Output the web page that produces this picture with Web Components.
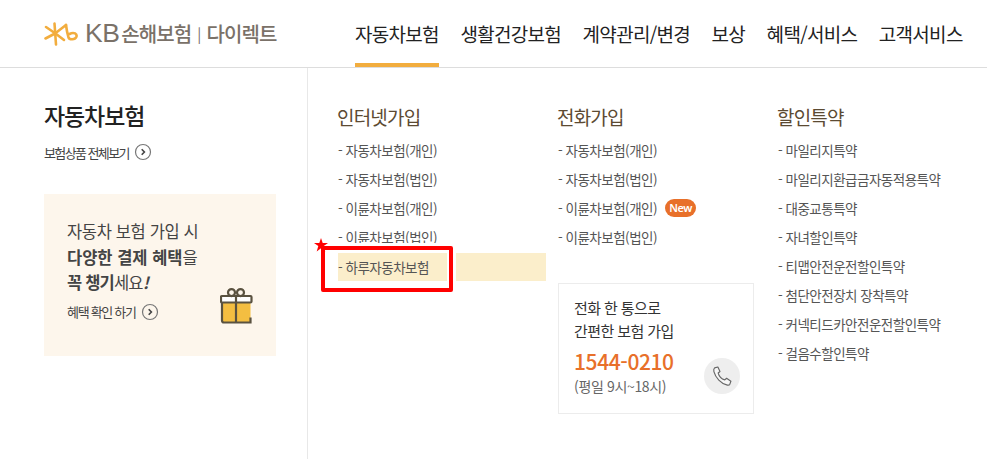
<!DOCTYPE html>
<html lang="ko">
<head>
<meta charset="utf-8">
<title>KB 손해보험 다이렉트</title>
<style>
    html, body { margin: 0; padding: 0; background: #fff; }
    body { width: 987px; height: 459px; overflow: hidden; font-family: "Noto Sans CJK KR", "Noto Sans", sans-serif; }
</style>
</head>
<body>
<site-header></site-header>
<mega-menu>
    <menu-aside></menu-aside>
    <menu-column title="인터넷가입">
        <menu-link>자동차보험(개인)</menu-link>
        <menu-link>자동차보험(법인)</menu-link>
        <menu-link>이륜차보험(개인)</menu-link>
        <menu-link>이륜차보험(법인)</menu-link>
        <menu-link highlight marked>하루자동차보험</menu-link>
    </menu-column>
    <menu-column title="전화가입">
        <menu-link>자동차보험(개인)</menu-link>
        <menu-link>자동차보험(법인)</menu-link>
        <menu-link badge="New">이륜차보험(개인)</menu-link>
        <menu-link>이륜차보험(법인)</menu-link>
        <phone-card></phone-card>
    </menu-column>
    <menu-column title="할인특약">
        <menu-link>마일리지특약</menu-link>
        <menu-link>마일리지환급금자동적용특약</menu-link>
        <menu-link>대중교통특약</menu-link>
        <menu-link>자녀할인특약</menu-link>
        <menu-link>티맵안전운전할인특약</menu-link>
        <menu-link>첨단안전장치 장착특약</menu-link>
        <menu-link>커넥티드카안전운전할인특약</menu-link>
        <menu-link>걸음수할인특약</menu-link>
    </menu-column>
</mega-menu>
<script>
const chevron = `
    <svg class="chev" width="18" height="18" viewBox="0 0 18 18" fill="none">
        <circle cx="9" cy="9" r="7.500" stroke="#777" stroke-width="1.200"/>
        <path d="M7.700 6.200 10.400 9 7.700 11.800" stroke="#444" stroke-width="1.600"/>
    </svg>`;

class SiteHeader extends HTMLElement {
    constructor() {
        super();
        this.attachShadow({ mode: 'open' });
        const items = ['자동차보험', '생활건강보험', '계약관리/변경', '보상', '혜택/서비스', '고객서비스'];
        this.shadowRoot.innerHTML = `
            <style>
                :host {
                    display: flex;
                    height: 67px;
                    border-bottom: 1px solid #ddd;
                    padding-left: 44px;
                }
                .logo {
                    display: flex;
                    align-items: center;
                    width: 311px;
                    height: 67px;
                    color: #7a7168;
                    white-space: nowrap;
                }
                .logo svg { margin-right: 7px; margin-top: 1px; flex: none; }
                .kb { font: 400 26.500px "Liberation Sans", sans-serif; letter-spacing: -0.500px; margin-right: 2px; }
                .name { font-size: 20px; font-weight: 500; letter-spacing: -0.900px; }
                .sep { font-size: 15px; margin: 0 5px 0 6px; }
                nav { display: flex; gap: 21.500px; }
                a {
                    display: block;
                    height: 63px;
                    line-height: 67px;
                    font-size: 19px;
                    letter-spacing: -0.700px;
                    color: #222;
                    white-space: nowrap;
                }
                a.active { border-bottom: 4px solid #f2ad3e; }
            </style>
            <div class="logo">
                <svg width="34" height="24" viewBox="0 0 34 24" fill="none" stroke="#f2ad3e" stroke-width="2.600" stroke-linecap="round" stroke-linejoin="round">
                    <path d="M10.500 1.500 12 22.500"/>
                    <path d="M1.500 16.500 11 11.500 22 3"/>
                    <path d="M2 5 11.500 11.500 20 18"/>
                    <path d="M22 3c.5 4 1.500 9 2.500 12.500 1 2.500 6.500 2.500 7.800-.5 1.200-3-2.300-5.500-6.800-3"/>
                </svg>
                <span class="kb">KB</span><span class="name">손해보험</span><span class="sep">|</span><span class="name">다이렉트</span>
            </div>
            <nav>${items.map((t, i) => `<a class="${i === 0 ? 'active' : ''}">${t}</a>`).join('')}</nav>
        `;
    }
}
customElements.define('site-header', SiteHeader);

class MegaMenu extends HTMLElement {
    constructor() {
        super();
        this.attachShadow({ mode: 'open' });
        this.shadowRoot.innerHTML = `
            <style>
                :host {
                    display: grid;
                    grid-template-columns: 308px 220px 220px 1fr;
                    height: 391px;
                }
            </style>
            <slot></slot>
        `;
    }
}
customElements.define('mega-menu', MegaMenu);

class MenuAside extends HTMLElement {
    constructor() {
        super();
        this.attachShadow({ mode: 'open' });
        this.shadowRoot.innerHTML = `
            <style>
                :host {
                    display: block;
                    border-right: 1px solid #e8e8e8;
                    padding: 30px 0 0 44px;
                    box-sizing: border-box;
                    color: #444;
                }
                h2 {
                    margin: 0;
                    font-size: 23px;
                    font-weight: 500;
                    line-height: 34px;
                    letter-spacing: -1.100px;
                    color: #222;
                }
                .all {
                    display: flex;
                    align-items: center;
                    gap: 5px;
                    margin-top: 9px;
                    height: 22px;
                    font-size: 13px;
                    letter-spacing: -1.600px;
                }
                .promo {
                    position: relative;
                    margin-top: 31px;
                    width: 232px;
                    height: 162px;
                    padding: 25px 0 0 23px;
                    box-sizing: border-box;
                    background: #fdf6ec;
                }
                .promo p {
                    margin: 0;
                    font-size: 16.500px;
                    line-height: 25.500px;
                    letter-spacing: -0.350px;
                }
                .wide { letter-spacing: 0; }
                .tight { letter-spacing: -0.800px; }
                b { font-weight: 700; }
                .check {
                    display: flex;
                    align-items: center;
                    gap: 5px;
                    margin-top: 5px;
                    height: 22px;
                    font-size: 13px;
                    letter-spacing: -1.300px;
                }
                .gift { position: absolute; left: 176px; top: 94px; }
            </style>
            <h2>자동차보험</h2>
            <div class="all">보험상품 전체보기 ${chevron}</div>
            <div class="promo">
                <p>자동차 보험 가입 시<br><span class="wide"><b>다양한 결제 혜택</b>을</span><br><span class="tight"><b>꼭 챙기</b>세요<b><i>!</i></b></span></p>
                <div class="check">혜택 확인 하기 ${chevron}</div>
                <svg class="gift" width="33" height="37" viewBox="0 0 33 37" fill="none" stroke="#5a5240" stroke-width="2.200">
                    <rect x="2" y="14" width="28.500" height="21" rx="2" fill="#f4be41" stroke="none"/>
                    <path d="M2 14v18.500a2 2 0 0 0 2 2H30.500v-5"/>
                    <rect x="1" y="8" width="30.500" height="6.500" rx="1" fill="#fff"/>
                    <path d="M16 8v27"/>
                    <circle cx="11.500" cy="4.600" r="3.500"/>
                    <circle cx="20.500" cy="4.600" r="3.500"/>
                </svg>
            </div>
        `;
    }
}
customElements.define('menu-aside', MenuAside);

class MenuColumn extends HTMLElement {
    constructor() {
        super();
        this.attachShadow({ mode: 'open' });
        this.shadowRoot.innerHTML = `
            <style>
                :host { display: block; padding: 35px 0 0 30px; }
                h3 {
                    margin: 0 0 4px -1px;
                    font-size: 19px;
                    font-weight: 400;
                    line-height: 28px;
                    letter-spacing: -0.800px;
                    color: #5c4a32;
                }
            </style>
            <h3>${this.getAttribute('title')}</h3>
            <slot></slot>
        `;
        this.removeAttribute('title');
    }
}
customElements.define('menu-column', MenuColumn);

class MenuLink extends HTMLElement {
    constructor() {
        super();
        this.attachShadow({ mode: 'open' });
        const badge = this.getAttribute('badge');
        const marked = this.hasAttribute('marked');
        this.shadowRoot.innerHTML = `
            <style>
                :host {
                    position: relative;
                    display: flex;
                    align-items: center;
                    height: 29px;
                    width: 208px;
                    font-size: 13.500px;
                    letter-spacing: -0.500px;
                    color: #555;
                    white-space: nowrap;
                }
                :host([highlight]) { background: #fbeecb; height: 28px; margin-top: 2px; }
                .badge {
                    margin-left: 8px;
                    height: 18px;
                    width: 31px;
                    border-radius: 9px;
                    background: #e8702a;
                    color: #fff;
                    font: 600 11px/17px "Noto Sans", sans-serif;
                    letter-spacing: -0.500px;
                    text-align: center;
                }
                .frame {
                    position: absolute;
                    left: -17px;
                    top: -7px;
                    width: 132px;
                    height: 46px;
                    box-sizing: border-box;
                    border: 4px solid #f00;
                    border-radius: 2px;
                    box-shadow: 0 0 0 3px #fff, inset 0 0 0 2px #fff;
                }
                .star { position: absolute; left: -24px; top: -15px; }
            </style>
            <span>- <slot></slot></span>
            ${badge ? `<span class="badge">${badge}</span>` : ''}
            ${marked ? `<span class="frame"></span>
                <svg class="star" width="14" height="14" viewBox="0 0 14 14"><path fill="#f00" d="M7 0l1.700 5H14l-4.300 3.100 1.600 5.300L7 10.200l-4.300 3.200 1.600-5.300L0 5h5.300z"/></svg>` : ''}
        `;
    }
}
customElements.define('menu-link', MenuLink);

class PhoneCard extends HTMLElement {
    constructor() {
        super();
        this.attachShadow({ mode: 'open' });
        this.shadowRoot.innerHTML = `
            <style>
                :host {
                    position: relative;
                    display: block;
                    box-sizing: border-box;
                    width: 196px;
                    height: 131px;
                    margin-top: 32px;
                    padding: 12px 0 0 15px;
                    border: 1px solid #ececec;
                    color: #333;
                }
                p {
                    margin: 0;
                    font-size: 15px;
                    line-height: 23px;
                    letter-spacing: -0.600px;
                }
                .tel {
                    margin-top: 5px;
                    font-size: 21px;
                    font-weight: 500;
                    line-height: 28px;
                    letter-spacing: -0.400px;
                    color: #e8702a;
                }
                .hours {
                    margin-top: 1px;
                    font-size: 14px;
                    line-height: 20px;
                    letter-spacing: -0.350px;
                    color: #666;
                }
                .call {
                    position: absolute;
                    left: 145px;
                    top: 74px;
                    width: 36px;
                    height: 36px;
                    border-radius: 50%;
                    background: #eee;
                    display: flex;
                    align-items: center;
                    justify-content: center;
                }
            </style>
            <p>전화 한 통으로<br>간편한 보험 가입</p>
            <div class="tel">1544-0210</div>
            <div class="hours">(평일 9시~18시)</div>
            <div class="call">
                <svg width="21" height="21" viewBox="0 0 20 20" fill="#f6f6f6" stroke="#666" stroke-width="1.100" stroke-linejoin="round">
                    <path d="M2.500 1.800 5.600 1l2 4.200-1.700 1.500c.7 2.600 3.400 5.600 6.300 6.500l1.700-1.500 4.100 2.800-1 2.800c-.4.800-1.800 1-3 .7C8.500 16.500 3.500 11.500 1.800 5.300c-.3-1.400 0-2.900.7-3.500z"/>
                </svg>
            </div>
        `;
    }
}
customElements.define('phone-card', PhoneCard);
</script>
</body>
</html>
